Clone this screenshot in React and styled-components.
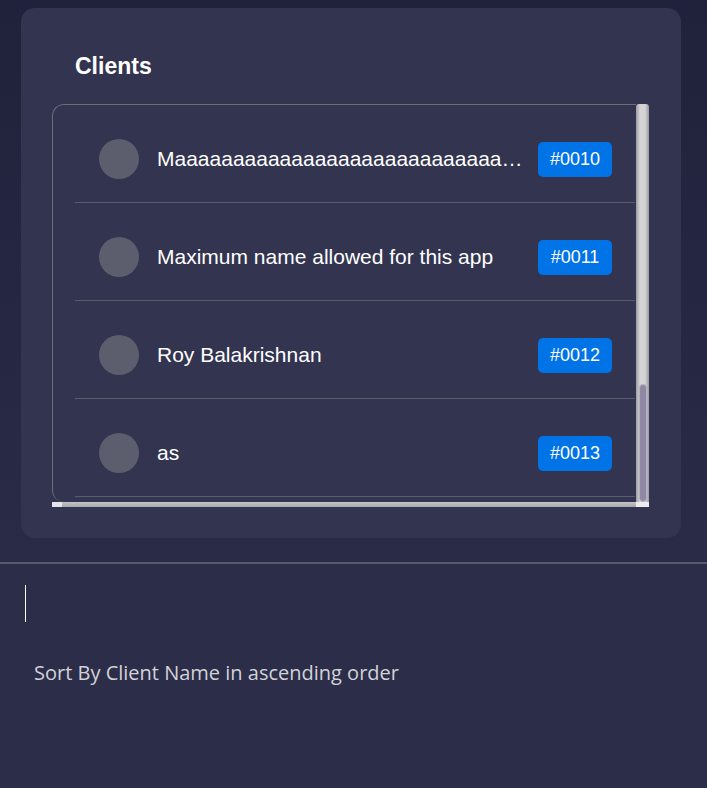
import React from "react";
import styled, { createGlobalStyle } from "styled-components";

const GlobalStyle = createGlobalStyle`
  html, body {
    margin: 0;
    padding: 0;
    background: #2c2d48;
  }
  body {
    font-family: "Liberation Sans", Arial, sans-serif;
  }
`;

const Page = styled.div`
  width: 707px;
  min-height: 788px;
  display: flex;
  flex-direction: column;
  background: #2c2d48;
`;

const Top = styled.section`
  background: linear-gradient(180deg, #20223c 0%, #2a2b46 100%);
  padding: 8px 26px 24px 21px;
`;

const Card = styled.div`
  background: #33344f;
  border-radius: 14px;
  padding: 44px 32px 31px 31px;
`;

const Title = styled.h2`
  margin: 0 0 24px 23px;
  font-size: 23px;
  line-height: 28px;
  font-weight: 700;
  color: #ffffff;
`;

const Frame = styled.div`
  display: flex;
  flex-direction: column;
`;

const FrameBody = styled.div`
  display: flex;
  height: 398px;
`;

const Viewport = styled.div`
  flex: 1;
  overflow: hidden;
  border-top: 1px solid #6b6c7a;
  border-left: 1px solid #6b6c7a;
  border-radius: 12px 0 0 12px;
`;

const Row = styled.div`
  display: flex;
  align-items: center;
  margin: 0 1px 0 22px;
  padding: 11px 23px 0 24px;
  box-sizing: border-box;
  height: 98px;
  border-bottom: 1px solid #5b5c6e;
`;

const Avatar = styled.div`
  width: 40px;
  height: 40px;
  border-radius: 50%;
  background: #5c5d6d;
  flex-shrink: 0;
`;

const Name = styled.span`
  flex: 1;
  min-width: 0;
  margin: 0 12px 0 18px;
  font-size: 21px;
  line-height: 26px;
  color: #ffffff;
  white-space: nowrap;
  overflow: hidden;
  text-overflow: ellipsis;
`;

const Badge = styled.span`
  flex-shrink: 0;
  width: 74px;
  height: 35px;
  display: flex;
  align-items: center;
  justify-content: center;
  border-radius: 5px;
  background: #0073e6;
  color: #ffffff;
  font-size: 18px;
`;

const VScroll = styled.div`
  width: 13px;
  box-sizing: border-box;
  display: flex;
  flex-direction: column;
  justify-content: flex-end;
  padding: 0 2px 0 3px;
  background: linear-gradient(90deg, #9c9ca2 0%, #d4d4d6 30%, #d4d4d6 70%, #9a9aa0 100%);
  border-radius: 3px 3px 0 0;
`;

const Thumb = styled.div`
  height: 116px;
  border-radius: 5px;
  background: #8f87a3;
  border: 1px solid #b3b0bf;
`;

const HScrollRow = styled.div`
  display: flex;
  height: 5px;
`;

const HScroll = styled.div`
  flex: 1;
  background: linear-gradient(180deg, #c3c3c8 0%, #a6a6ab 100%);
`;

const HEnd = styled.div`
  width: 10px;
  background: #e6e6ea;
`;

const Corner = styled.div`
  width: 13px;
  background: #ececee;
`;

const Rule = styled.hr`
  margin: 0;
  border: none;
  height: 2px;
  background: #595a69;
`;

const Bottom = styled.section`
  flex: 1;
  padding: 21px 0 0 25px;
`;

const Caret = styled.div`
  width: 1px;
  height: 37px;
  background: #ffffff;
`;

const SortNote = styled.p`
  margin: 37px 0 0 9px;
  font-family: "Open Sans", "Noto Sans", sans-serif;
  font-size: 20px;
  line-height: 27px;
  color: #d2d2d9;
`;

const clients = [
  { name: "Maaaaaaaaaaaaaaaaaaaaaaaaaaaaaaaaaaaaaaaaaaa", id: "#0010" },
  { name: "Maximum name allowed for this app", id: "#0011" },
  { name: "Roy Balakrishnan", id: "#0012" },
  { name: "as", id: "#0013" },
  { name: "Zed", id: "#0014" },
];

export default function App() {
  return (
    <Page>
      <GlobalStyle />
      <Top>
        <Card>
          <Title>Clients</Title>
          <Frame>
            <FrameBody>
              <Viewport>
                {clients.map((c) => (
                  <Row key={c.id}>
                    <Avatar />
                    <Name>{c.name}</Name>
                    <Badge>{c.id}</Badge>
                  </Row>
                ))}
              </Viewport>
              <VScroll>
                <Thumb />
              </VScroll>
            </FrameBody>
            <HScrollRow>
              <HEnd />
              <HScroll />
              <Corner />
            </HScrollRow>
          </Frame>
        </Card>
      </Top>
      <Rule />
      <Bottom>
        <Caret />
        <SortNote>Sort By Client Name in ascending order</SortNote>
      </Bottom>
    </Page>
  );
}
